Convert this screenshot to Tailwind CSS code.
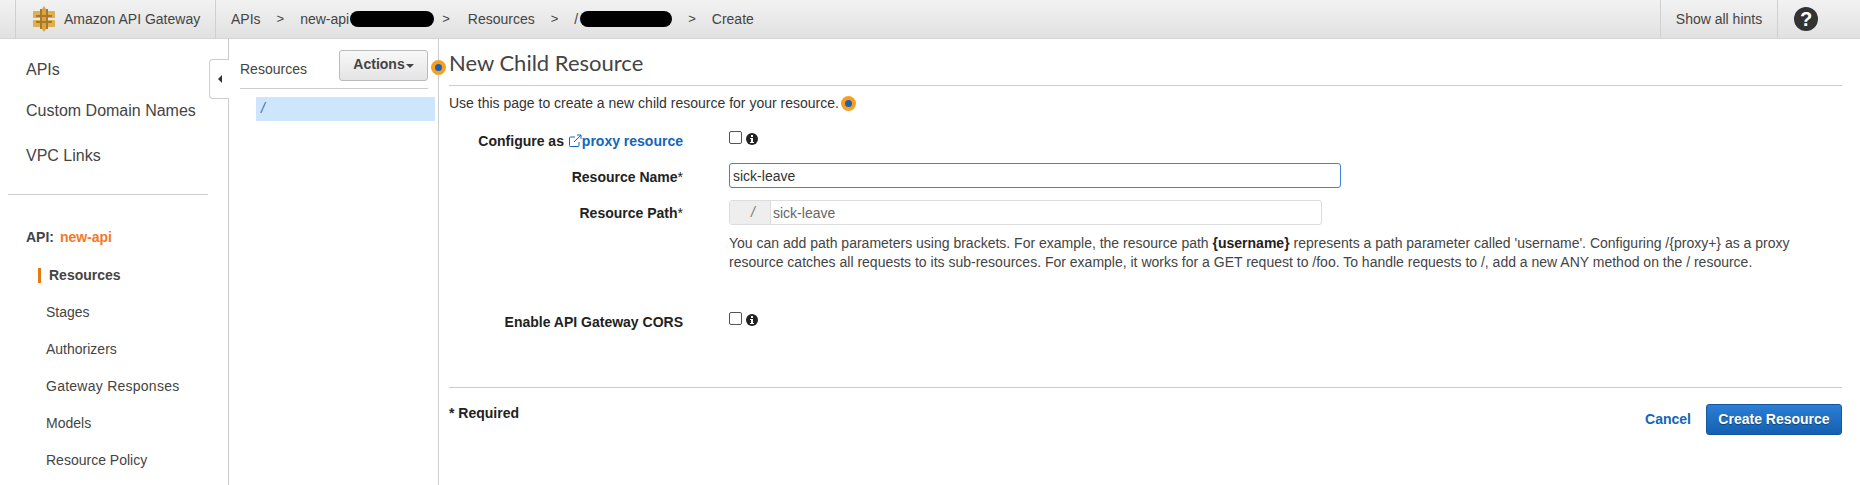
<!DOCTYPE html>
<html lang="en">
  <head>
    <meta charset="UTF-8" />
    <title>Amazon API Gateway</title>
    <script src="https://cdn.jsdelivr.net/npm/@tailwindcss/browser@4"></script>
  </head>
  <body class="h-[485px] overflow-hidden bg-white font-['Liberation_Sans',sans-serif] text-[14px] text-[#444]">
    <!-- top bar -->
    <header class="flex h-[39px] items-stretch border-b border-[#d5d5d5] bg-gradient-to-b from-[#f2f2f2] to-[#e1e1e1] pl-[15px]">
      <div class="flex w-[201px] items-center gap-[9px] border-x border-[#d0d0d0] pl-[17px]">
        <svg class="h-[26px] w-[22px]" viewBox="0 0 22 26">
          <path fill="#e0b050" d="M0 5h7v7H0zM0 14h7v7H0zM15 5h7v7h-7zM15 14h7v7h-7z" />
          <path fill="#a8792a" d="M7 3h2v20H7zM13 3h2v20h-2z" />
          <path fill="#d9a741" d="M9 3l2-3 2 3v20l-2 3-2-3z" />
          <path fill="#a8792a" d="M3 9h16v2H3zM3 15h16v2H3z" />
        </svg>
        <span>Amazon API Gateway</span>
      </div>
      <nav class="flex flex-1 items-center pl-[15px]">
        <span>APIs</span>
        <span class="mx-[16px] text-[13px]">&gt;</span>
        <span>new-api</span>
        <span class="ml-px h-[16px] w-[84px] rounded-full bg-black"></span>
        <span class="mr-[18px] ml-[8px] text-[13px]">&gt;</span>
        <span>Resources</span>
        <span class="mx-[16px] text-[13px]">&gt;</span>
        <span>/</span>
        <span class="ml-[2px] h-[16px] w-[92px] rounded-full bg-black"></span>
        <span class="mx-[16px] text-[13px]">&gt;</span>
        <span>Create</span>
      </nav>
      <div class="flex w-[117px] items-center justify-center border-l border-[#d0d0d0]">Show all hints</div>
      <div class="flex w-[83px] items-center border-l border-[#d0d0d0] pl-[16px]">
        <span class="flex h-6 w-6 items-center justify-center rounded-full bg-[#333] text-[20px] leading-none font-bold text-white">?</span>
      </div>
    </header>

    <div class="flex h-[446px]">
      <!-- left nav -->
      <aside class="relative w-[229px] shrink-0 border-r border-[#ccc] pt-[19px]">
        <ul class="pl-[26px] text-[16px]">
          <li class="h-[41px] leading-[23px]">APIs</li>
          <li class="h-[45px] leading-[23px]">Custom Domain Names</li>
          <li class="leading-[23px]">VPC Links</li>
        </ul>
        <hr class="mx-[8px] mt-[27px] w-[200px] border-[#ccc]" />
        <p class="mt-[32px] pl-[26px] font-bold">API: <span class="ml-[2px] text-[#f5771f]">new-api</span></p>
        <ul class="mt-[17px]">
          <li class="ml-[38px] flex h-[37px] items-start">
            <span class="mt-[3px] h-[15px] w-[3px] bg-[#e47911]"></span>
            <span class="ml-[8px] leading-[20px] font-bold">Resources</span>
          </li>
          <li class="h-[37px] pl-[46px] leading-[20px]">Stages</li>
          <li class="h-[37px] pl-[46px] leading-[20px]">Authorizers</li>
          <li class="h-[37px] pl-[46px] leading-[20px] tracking-[0.25px]">Gateway Responses</li>
          <li class="h-[37px] pl-[46px] leading-[20px]">Models</li>
          <li class="h-[37px] pl-[46px] leading-[20px]">Resource Policy</li>
        </ul>
        <!-- collapse tab -->
        <button class="absolute top-[20px] -right-px flex h-[40px] w-[20px] items-center justify-center rounded-l border border-r-0 border-[#ccc] bg-white">
          <span class="h-0 w-0 border-y-[4px] border-r-[4px] border-y-transparent border-r-[#333]"></span>
        </button>
      </aside>

      <!-- resource tree -->
      <section class="relative w-[210px] shrink-0 border-r border-[#ccc] pt-[11px]">
        <div class="mr-[10px] ml-[11px] flex h-[39px] items-start justify-between border-b border-[#ccc]">
          <span class="mt-[9px] leading-[20px]">Resources</span>
          <button class="flex h-[31px] w-[89px] items-center justify-center gap-px rounded-[3px] border border-[#bbb] bg-gradient-to-b from-[#f8f8f8] to-[#e4e4e4] pb-[2px] font-bold">
            Actions<span class="mt-[2px] h-0 w-0 border-x-[4px] border-t-[4px] border-x-transparent border-t-[#444]"></span>
          </button>
        </div>
        <div class="mt-[8px] mr-[3px] ml-[27px] h-[24px] bg-[#cde6fd] pl-[5px] leading-[22px] text-[#3f6fa8] italic">/</div>
        <!-- hint -->
        <span class="absolute top-[21px] -right-[8px] flex h-[15px] w-[15px] items-center justify-center rounded-full bg-[#f7a01f]">
          <span class="h-[7px] w-[7px] rounded-full bg-[#1f5fb4]"></span>
        </span>
      </section>

      <!-- form -->
      <main class="flex-1 pt-[10px] pr-[18px] pl-[10px]">
        <h1 class="border-b border-[#ccc] pb-[9px] font-['Lato',sans-serif] text-[22px] leading-[27px]">New Child Resource</h1>
        <p class="mt-[7px] flex h-[20px] items-center text-[#333]">
          Use this page to create a new child resource for your resource.
          <span class="ml-[2px] flex h-[15px] w-[15px] items-center justify-center rounded-full bg-[#f7a01f]">
            <span class="h-[7px] w-[7px] rounded-full bg-[#1f5fb4]"></span>
          </span>
        </p>

        <div class="mt-[17px] grid grid-cols-[234px_1fr] gap-x-[46px] font-bold text-[#222]">
          <label class="h-[33px] pt-[1px] text-right leading-[20px]">Configure as <a class="text-[#16b]"><svg class="mb-[2px] inline h-[14px] w-[14px]" viewBox="0 0 14 14" fill="none" stroke="#16b" stroke-width="1"><path d="M7 3H2.500a1 1 0 0 0-1 1v7.500a1 1 0 0 0 1 1H10a1 1 0 0 0 1-1V8M6 8l7-7M9 1h4v4" /></svg>proxy resource</a></label>
          <div class="flex h-[33px] items-start gap-[4px] font-normal">
            <input type="checkbox" class="mt-[1px] h-[13px] w-[13px] appearance-none rounded-[2px] border border-[#555] bg-white" />
            <svg class="mt-[3px] h-[12px] w-[12px]" viewBox="0 0 12 12"><circle cx="6" cy="6" r="6" fill="#222" /><rect x="5" y="2" width="2" height="2" fill="#fff" /><path fill="#fff" d="M4 5h3v4h1v1H4V9h1V6H4z" /></svg>
          </div>

          <label class="h-[36px] pt-[4px] text-right leading-[20px]">Resource Name<span class="font-normal">*</span></label>
          <input value="sick-leave" class="h-[25px] w-[612px] rounded-[3px] border border-[#3b86d8] px-[3px] text-[14px] font-normal text-[#333]" />

          <label class="mt-[1px] pt-[3px] text-right leading-[20px]">Resource Path<span class="font-normal">*</span></label>
          <div class="mt-[1px] flex h-[25px] w-[593px] rounded-[3px] border border-[#ddd] font-normal">
            <span class="flex w-[40px] items-center justify-center bg-[#eee] pl-[6px] text-[#777] italic">/</span>
            <span class="border-l border-[#ddd] pl-[2px] leading-[24px] text-[#666]">sick-leave</span>
          </div>

          <p class="col-start-2 mt-[9px] h-[78px] text-[14px] leading-[19px] font-normal text-[#444]">
            You can add path parameters using brackets. For example, the resource path <b class="text-[#222]">{username}</b> represents a path parameter called 'username'. Configuring /{proxy+} as a proxy<br />
            resource catches all requests to its sub-resources. For example, it works for a GET request to /foo. To handle requests to /, add a new ANY method on the / resource.
          </p>

          <label class="text-right leading-[20px]">Enable API Gateway CORS</label>
          <div class="flex items-start gap-[4px] font-normal">
            <input type="checkbox" class="h-[13px] w-[13px] appearance-none rounded-[2px] border border-[#555] bg-white" />
            <svg class="mt-[2px] h-[12px] w-[12px]" viewBox="0 0 12 12"><circle cx="6" cy="6" r="6" fill="#222" /><rect x="5" y="2" width="2" height="2" fill="#fff" /><path fill="#fff" d="M4 5h3v4h1v1H4V9h1V6H4z" /></svg>
          </div>
        </div>

        <hr class="mt-[55px] border-[#ccc]" />
        <div class="mt-[16px] flex items-start justify-between">
          <span class="leading-[18px] font-bold text-[#222]">* Required</span>
          <div class="flex items-center gap-[15px] font-bold">
            <a class="text-[#16b]">Cancel</a>
            <button class="h-[31px] w-[136px] rounded-[3px] border border-[#15569f] bg-gradient-to-b from-[#2b7fd6] to-[#1460b0] text-white [text-shadow:0_1px_1px_#0006]">Create Resource</button>
          </div>
        </div>
      </main>
    </div>
  </body>
</html>
